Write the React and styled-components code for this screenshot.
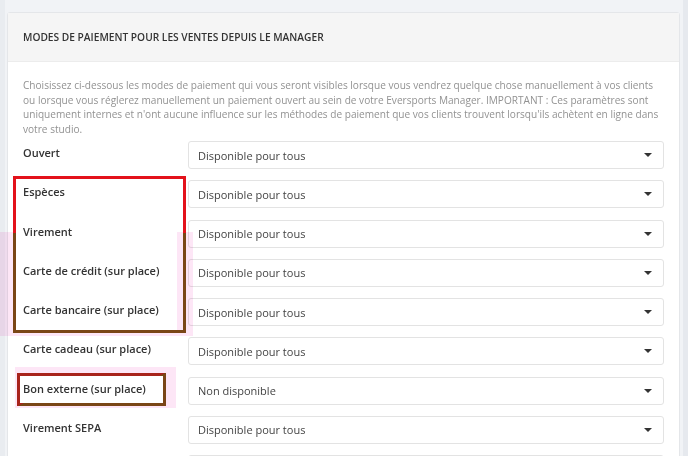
import React from "react";
import styled, { createGlobalStyle } from "styled-components";

const GlobalStyle = createGlobalStyle`
  html, body {
    margin: 0;
    padding: 0;
    background: #eef0f4;
    font-family: "Open Sans", "Noto Sans", sans-serif;
  }
`;

const Page = styled.div`
  position: relative;
  width: 688px;
  height: 456px;
  overflow: hidden;
  padding: 12px 0 0 7px;
  box-sizing: border-box;
  background: linear-gradient(to right, #e9ecf0 0 5px, #f1f3f6 5px 100%);
`;

const Scrollbar = styled.div`
  position: absolute;
  top: 0;
  right: 0;
  width: 5px;
  height: 100%;
  background: #e6e9ee;
`;

const Card = styled.div`
  width: 673px;
  background: #fff;
  border: 1px solid #e4e6e9;
  border-radius: 3px 3px 0 0;
  box-sizing: border-box;
`;

const CardHeader = styled.div`
  height: 48px;
  display: flex;
  align-items: center;
  padding: 0 15px;
  background: #f5f5f5;
  border-bottom: 1px solid #ececec;
`;

const Title = styled.h3`
  margin: 0;
  font-size: 10.2px;
  font-weight: 600;
  color: #333;
`;

const CardBody = styled.div`
  padding: 16px 15px 0 15px;
`;

const Description = styled.p`
  margin: 0 0 5px;
  font-size: 10.1px;
  line-height: 14.5px;
  color: #929292;
`;

const Row = styled.div`
  display: flex;
  align-items: flex-start;
  height: 28px;
  margin-bottom: 11.25px;
`;

const Label = styled.div`
  width: 165px;
  flex-shrink: 0;
  padding-top: 4px;
  font-size: 11px;
  line-height: 16px;
  font-weight: 600;
  color: #333;
`;

const Select = styled.div`
  flex: 1;
  height: 28px;
  box-sizing: border-box;
  display: flex;
  align-items: center;
  justify-content: space-between;
  padding: 0 9px;
  border: 1px solid #e3e3e3;
  border-radius: 3px;
  font-size: 11px;
  color: #444;
  background: #fff;
`;

const Caret = styled.span`
  width: 0;
  height: 0;
  margin-right: 2px;
  border-left: 4px solid transparent;
  border-right: 4px solid transparent;
  border-top: 4px solid #333;
`;

/* pink glow frame drawn round an annotation box */
const Glow = styled.div`
  position: absolute;
  left: ${(p) => p.$x}px;
  top: ${(p) => p.$y}px;
  width: ${(p) => p.$w}px;
  height: ${(p) => p.$h}px;
  box-sizing: border-box;
  border-style: solid;
  border-color: #fde6f6;
  border-width: ${(p) => p.$widths};
  mix-blend-mode: multiply;
  pointer-events: none;
`;

const MarkBox = styled.div`
  position: absolute;
  left: ${(p) => p.$x}px;
  top: ${(p) => p.$y}px;
  width: ${(p) => p.$w}px;
  height: ${(p) => p.$h}px;
  box-sizing: border-box;
  border: 3px solid;
  border-image: ${(p) => p.$border} 1;
  pointer-events: none;
`;

const methods = [
  ["Ouvert", "Disponible pour tous"],
  ["Espèces", "Disponible pour tous"],
  ["Virement", "Disponible pour tous"],
  ["Carte de crédit (sur place)", "Disponible pour tous"],
  ["Carte bancaire (sur place)", "Disponible pour tous"],
  ["Carte cadeau (sur place)", "Disponible pour tous"],
  ["Bon externe (sur place)", "Non disponible"],
  ["Virement SEPA", "Disponible pour tous"],
  ["", ""],
];

const App = () => {
  return (
    <>
      <GlobalStyle />
      <Page>
        <Card>
          <CardHeader>
            <Title>MODES DE PAIEMENT POUR LES VENTES DEPUIS LE MANAGER</Title>
          </CardHeader>
          <CardBody>
            <Description>
              Choisissez ci-dessous les modes de paiement qui vous seront
              visibles lorsque vous vendrez quelque chose manuellement à vos
              clients ou lorsque vous réglerez manuellement un paiement ouvert
              au sein de votre Eversports Manager. IMPORTANT : Ces paramètres
              sont uniquement internes et n'ont aucune influence sur les
              méthodes de paiement que vos clients trouvent lorsqu'ils achètent
              en ligne dans votre studio.
            </Description>
            {methods.map(([label, value], i) => (
              <Row key={i}>
                <Label>{label}</Label>
                <Select>
                  {value}
                  <Caret />
                </Select>
              </Row>
            ))}
          </CardBody>
        </Card>
        <Scrollbar />

        {/* annotation overlays */}
        <Glow $x={0} $y={232} $w={193} $h={104} $widths="0 16px 4px 13px" />
        <Glow $x={15} $y={367} $w={161} $h={41} $widths="6px 10px 3px 2px" />
        <MarkBox
          $x={13}
          $y={176}
          $w={173}
          $h={157}
          $border="linear-gradient(to bottom, #e3121b 0 36%, #7a4616 36% 100%)"
        />
        <MarkBox
          $x={17}
          $y={373}
          $w={149}
          $h={33}
          $border="linear-gradient(to bottom right, #a8231b 0 50%, #7a4616 50% 100%)"
        />
      </Page>
    </>
  );
};

export default App;
